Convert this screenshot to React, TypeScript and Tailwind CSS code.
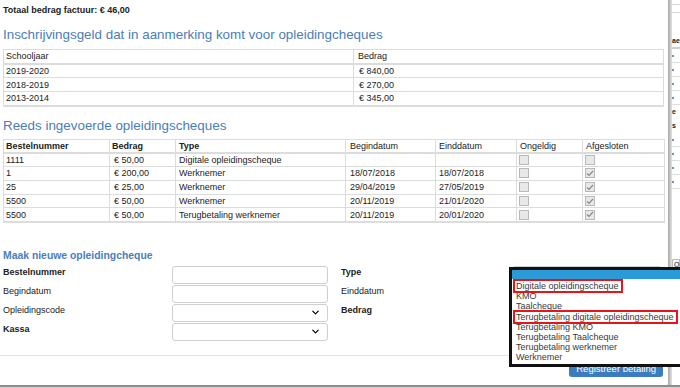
import { ChevronDown } from 'lucide-react';

const fees = [
  { year: '2019-2020', amount: '€ 840,00' },
  { year: '2018-2019', amount: '€ 270,00' },
  { year: '2013-2014', amount: '€ 345,00' },
];

const cheques = [
  { nr: '1111', amount: '€ 50,00', type: 'Digitale opleidingscheque', start: '', end: '', closed: false },
  { nr: '1', amount: '€ 200,00', type: 'Werknemer', start: '18/07/2018', end: '18/07/2018', closed: true },
  { nr: '25', amount: '€ 25,00', type: 'Werknemer', start: '29/04/2019', end: '27/05/2019', closed: true },
  { nr: '5500', amount: '€ 50,00', type: 'Werknemer', start: '20/11/2019', end: '21/01/2020', closed: true },
  { nr: '5500', amount: '€ 50,00', type: 'Terugbetaling werknemer', start: '20/11/2019', end: '20/01/2020', closed: true },
];

const typeOptions = [
  { label: 'Digitale opleidingscheque', marked: true },
  { label: 'KMO', marked: false },
  { label: 'Taalcheque', marked: false },
  { label: 'Terugbetaling digitale opleidingscheque', marked: true },
  { label: 'Terugbetaling KMO', marked: false },
  { label: 'Terugbetaling Taalcheque', marked: false },
  { label: 'Terugbetaling werknemer', marked: false },
  { label: 'Werknemer', marked: false },
];

function Box({ checked }: { checked: boolean }) {
  return (
    <span className="flex h-[10px] w-[10px] items-center justify-center border border-[#b8b8b8] bg-[#e8e8e8]">
      {checked && (
        <svg width="8" height="7" viewBox="0 0 8 7">
          <path d="M1 3.5 L3 5.5 L7 1" fill="none" stroke="#8a8a8a" strokeWidth="1.2" />
        </svg>
      )}
    </span>
  );
}

function Field({ select }: { select?: boolean }) {
  return (
    <div className="flex h-[18px] items-center justify-end rounded-[3px] border border-[#cfcfcf] bg-white pr-[6px]">
      {select && <ChevronDown size={11} strokeWidth={2.6} className="text-black" />}
    </div>
  );
}

function Label({ text, bold }: { text: string; bold?: boolean }) {
  return <span className={`pt-[1px] leading-[11px] ${bold ? 'font-bold' : ''}`}>{text}</span>;
}

export default function App() {
  const cell = 'h-[14px] border border-[#dcdcdc] px-[2px] py-0 text-left align-middle leading-[12px]';
  const cell2 = 'h-[13.8px] border border-[#dcdcdc] px-[2px] py-0 text-left align-middle leading-[12px]';

  return (
    <div className="relative flex h-[388px] w-[680px] flex-col overflow-hidden bg-[#efefef] font-['Liberation_Sans',Arial,sans-serif] text-[9px] text-[#222]">
      <div className="flex h-[385px]">
        {/* modal */}
        <div className="flex w-[668px] flex-col rounded-br-[4px] bg-white pl-[3px] pr-[3px]">
          <p className="mt-[5px] font-bold leading-[11px]">Totaal bedrag factuur: € 46,00</p>

          <h3 className="mt-[11px] text-[13.4px] leading-[16px] text-[#4a7ebb]">
            Inschrijvingsgeld dat in aanmerking komt voor opleidingcheques
          </h3>
          <table className="mt-[6px] w-[661px] table-fixed border-collapse border-b-2 border-[#dcdcdc]">
            <colgroup>
              <col className="w-[350px]" />
              <col />
            </colgroup>
            <thead>
              <tr className="border-b-2 border-[#dcdcdc]">
                <th className={`${cell} font-normal`}>Schooljaar</th>
                <th className={`${cell} pl-[4px] font-normal`}>Bedrag</th>
              </tr>
            </thead>
            <tbody>
              {fees.map((f) => (
                <tr key={f.year}>
                  <td className={cell}>{f.year}</td>
                  <td className={`${cell} pl-[5px]`}>{f.amount}</td>
                </tr>
              ))}
            </tbody>
          </table>

          <h3 className="mt-[11px] text-[13.4px] leading-[16px] text-[#4a7ebb]">Reeds ingevoerde opleidingscheques</h3>
          <table className="mt-[5px] w-[662px] table-fixed border-collapse border-b-2 border-[#dcdcdc]">
            <colgroup>
              <col className="w-[106px]" />
              <col className="w-[66px]" />
              <col className="w-[170px]" />
              <col className="w-[90px]" />
              <col className="w-[81px]" />
              <col className="w-[66px]" />
              <col />
            </colgroup>
            <thead>
              <tr className="border-b-2 border-[#dcdcdc]">
                <th className={`${cell2} font-bold`}>Bestelnummer</th>
                <th className={`${cell2} font-bold`}>Bedrag</th>
                <th className={`${cell2} pl-[3px] font-bold`}>Type</th>
                <th className={`${cell2} pl-[4px] font-normal`}>Begindatum</th>
                <th className={`${cell2} pl-[3px] font-normal`}>Einddatum</th>
                <th className={`${cell2} pl-[3px] font-normal`}>Ongeldig</th>
                <th className={`${cell2} pl-[3px] font-normal`}>Afgesloten</th>
              </tr>
            </thead>
            <tbody>
              {cheques.map((c, i) => (
                <tr key={i}>
                  <td className={cell2}>{c.nr}</td>
                  <td className={`${cell2} pl-[4px]`}>{c.amount}</td>
                  <td className={`${cell2} pl-[3px]`}>{c.type}</td>
                  <td className={`${cell2} pl-[4px]`}>{c.start}</td>
                  <td className={`${cell2} pl-[3px]`}>{c.end}</td>
                  <td className={`${cell2} pl-[2px]`}>
                    <Box checked={false} />
                  </td>
                  <td className={`${cell2} pl-[2px]`}>
                    <Box checked={c.closed} />
                  </td>
                </tr>
              ))}
            </tbody>
          </table>

          <h4 className="mt-[26px] text-[10.4px] font-bold leading-[13px] text-[#4a7ebb]">Maak nieuwe opleidingcheque</h4>
          <div className="mt-[4px] grid grid-cols-[169px_156px_13px_171px_150px] gap-y-[1px]">
            <Label text="Bestelnummer" bold />
            <Field />
            <span />
            <Label text="Type" bold />
            <Field select />

            <Label text="Begindatum" />
            <Field />
            <span />
            <Label text="Einddatum" />
            <Field />

            <Label text="Opleidingscode" />
            <Field select />
            <span />
            <Label text="Bedrag" bold />
            <Field />

            <Label text="Kassa" bold />
            <Field select />
            <span />
            <span />
            <span />
          </div>

          <div className="-ml-[3px] -mr-[3px] mt-[14px] border-t border-[#e3e3e3]" />
          <div className="flex justify-end pr-[2px] pt-[2px]">
            <button className="h-[19px] rounded-[3px] bg-[#3b7cbf] px-[7px] text-[9.5px] leading-[21px] text-white">
              Registreer betaling
            </button>
          </div>
        </div>

        {/* shadow edge and page behind the modal */}
        <div className="w-[4px] bg-gradient-to-r from-[#a8a8a8] to-[#e2e2e2]" />
        <div className="flex flex-1 flex-col overflow-hidden bg-white text-[7px] leading-[14px] whitespace-nowrap">
          <div className="mt-[4px] h-[9px] border-y border-[#d6d6d6]" />
          <div className="mt-[21px] border-b-2 border-[#cfcfcf] font-bold leading-[13px]">ae</div>
          {[0, 1, 2, 3].map((i) => (
            <div key={i} className="flex h-[14px] items-center border-b border-[#dedede]">
              <span className="h-[2px] w-[2px] rounded-full bg-[#3a6fb0]" />
            </div>
          ))}
          <div className="font-bold">e</div>
          <div className="font-bold">s</div>
          {[0, 1, 2, 3].map((i) => (
            <div key={i} className="flex h-[14px] items-center border-b border-[#dedede]">
              <span className="h-[2px] w-[2px] rounded-full bg-[#3a6fb0]" />
            </div>
          ))}
          <div className="mt-[70px] h-[12px] border border-[#bdbdbd] bg-[#f4f4f4] pl-[1px] leading-[10px]">O</div>
        </div>
      </div>
      <div className="h-[3px] border-t-2 border-[#8e8e8e] bg-[#d4d4d4]" />

      {/* open select list */}
      <div className="absolute left-[509px] top-[267px] h-[100px] w-[180px] border-[3px] border-[#111] bg-white">
        <div className="h-[9px] bg-[#2a9bd7]" />
        <ul className="pl-[4px] pt-[2px] leading-[10.2px] text-[#3a3a3a]">
          {typeOptions.map((o) => (
            <li key={o.label} className="h-[10.2px]">
              <span className={o.marked ? 'relative pl-[1px] pr-[2px] -ml-[1px] outline-2 outline-[#e8141b]' : ''}>
                {o.label}
              </span>
            </li>
          ))}
        </ul>
      </div>
    </div>
  );
}
